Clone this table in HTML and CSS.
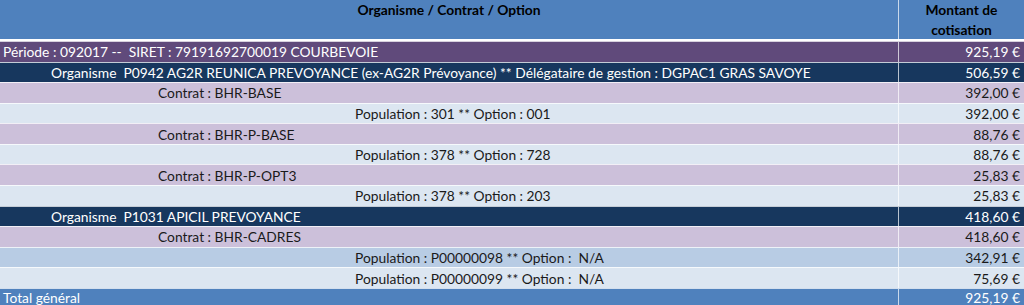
FILE: index.html
```html
<!DOCTYPE html>
<html lang="fr">
<head>
<meta charset="utf-8">
<title>Cotisations</title>
<link rel="stylesheet" href="styles.css">
</head>
<body>
<div class="report">
  <div class="row head">
    <div class="cell label center"><b>Organisme / Contrat / Option</b></div>
    <div class="cell amount center"><b>Montant de<br>cotisation</b></div>
  </div>
  <div class="row periode">
    <div class="cell label l0">Période : 092017 --  SIRET : 79191692700019 COURBEVOIE</div>
    <div class="cell amount">925,19 €</div>
  </div>
  <div class="row org">
    <div class="cell label l1">Organisme  P0942 AG2R REUNICA PREVOYANCE (ex-AG2R Prévoyance) ** Délégataire de gestion : DGPAC1 GRAS SAVOYE</div>
    <div class="cell amount">506,59 €</div>
  </div>
  <div class="row contrat">
    <div class="cell label l2">Contrat : BHR-BASE</div>
    <div class="cell amount">392,00 €</div>
  </div>
  <div class="row pop">
    <div class="cell label l3">Population : 301 ** Option : 001</div>
    <div class="cell amount">392,00 €</div>
  </div>
  <div class="row contrat">
    <div class="cell label l2">Contrat : BHR-P-BASE</div>
    <div class="cell amount">88,76 €</div>
  </div>
  <div class="row pop">
    <div class="cell label l3">Population : 378 ** Option : 728</div>
    <div class="cell amount">88,76 €</div>
  </div>
  <div class="row contrat">
    <div class="cell label l2">Contrat : BHR-P-OPT3</div>
    <div class="cell amount">25,83 €</div>
  </div>
  <div class="row pop">
    <div class="cell label l3">Population : 378 ** Option : 203</div>
    <div class="cell amount">25,83 €</div>
  </div>
  <div class="row org">
    <div class="cell label l1">Organisme  P1031 APICIL PREVOYANCE</div>
    <div class="cell amount">418,60 €</div>
  </div>
  <div class="row contrat">
    <div class="cell label l2">Contrat : BHR-CADRES</div>
    <div class="cell amount">418,60 €</div>
  </div>
  <div class="row pop alt">
    <div class="cell label l3">Population : P00000098 ** Option :  N/A</div>
    <div class="cell amount">342,91 €</div>
  </div>
  <div class="row pop">
    <div class="cell label l3">Population : P00000099 ** Option :  N/A</div>
    <div class="cell amount">75,69 €</div>
  </div>
  <div class="row total">
    <div class="cell label l0">Total général</div>
    <div class="cell amount">925,19 €</div>
  </div>
</div>
</body>
</html>
```

FILE: styles.css
```css
html, body {
  margin: 0;
  padding: 0;
  background: #ffffff;
}
.report {
  width: 1024px;
  font-family: Lato, "Open Sans", sans-serif;
  font-size: 13.8px;
  color: #1a1a1a;
}
.row {
  display: grid;
  grid-template-columns: 898px 126px;
  height: 19.58px;
  border-top: 1px solid rgba(255, 255, 255, 0.75);
}
.cell {
  display: flex;
  align-items: center;
  white-space: pre;
  overflow: hidden;
}
.amount {
  justify-content: flex-end;
  padding-right: 4px;
  border-left: 1px solid rgba(255, 255, 255, 0.7);
}
.center {
  justify-content: center;
  text-align: center;
  padding-right: 0;
}
.head {
  height: 39px;
  border-top: 0;
  border-bottom: 2px solid #ffffff;
  background: #4f81bd;
  color: #000000;
  line-height: 20px;
}
.head b { font-weight: 700; }
.head .label { align-items: flex-start; }
.periode { background: #604a7b; color: #ffffff; }
.org { background: #17375e; color: #ffffff; }
.contrat { background: #ccc0da; }
.pop { background: #dce6f1; }
.pop.alt { background: #b8cce4; }
.total { background: #4f81bd; color: #ffffff; height: 24px; }
.total .cell { align-items: flex-start; padding-top: 0; }
.l0 { padding-left: 3px; }
.l1 { padding-left: 51px; }
.l2 { padding-left: 158px; }
.l3 { padding-left: 355px; }
```
